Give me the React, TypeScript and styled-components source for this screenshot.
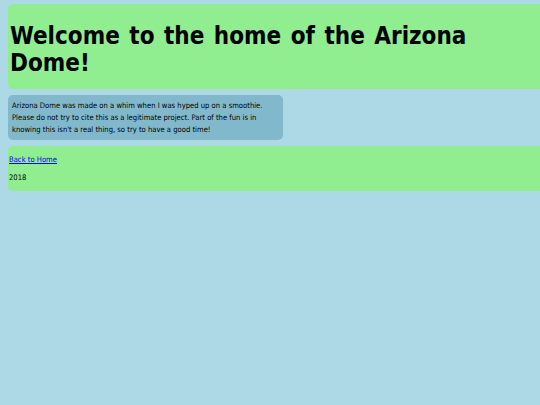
import * as React from "react";
import styled, { createGlobalStyle } from "styled-components";

const GlobalStyle = createGlobalStyle`
  html, body {
    margin: 0;
    padding: 0;
    background: #add8e6;
    overflow: hidden;
  }
  body {
    font-family: "Comic Sans MS", "DejaVu Sans Condensed", "DejaVu Sans", sans-serif;
    color: #000;
  }
`;

const Page = styled.div`
  padding: 4px 0 0 8px;
  display: flex;
  flex-direction: column;
  align-items: flex-start;
  gap: 6px;
`;

const Header = styled.header`
  box-sizing: border-box;
  width: calc(100% + 8px);
  height: 85px;
  padding: 19px 2px 0;
  background: #90ee90;
  border-radius: 5px 0 0 5px;
`;

const Title = styled.h1`
  margin: 0;
  font-size: 24px;
  line-height: 27px;
  font-weight: bold;
  letter-spacing: 0;
  word-spacing: 2px;
`;

const Blurb = styled.article`
  box-sizing: border-box;
  width: 275px;
  height: 45px;
  padding: 5px 4px;
  background: #82b8cc;
  border-radius: 5px;
  font-size: 7.6px;
  line-height: 12px;
`;

const Footer = styled.footer`
  box-sizing: border-box;
  width: calc(100% + 8px);
  height: 45px;
  padding: 8px 1px 0;
  background: #90ee90;
  border-radius: 5px 0 0 5px;
  font-size: 7.6px;
  line-height: 12px;
`;

const HomeLink = styled.a`
  display: block;
  color: #0000ee;
  text-decoration: underline;
  margin-bottom: 6px;
`;

const Year = styled.p`
  margin: 0;
`;

export default function App() {
  return (
    <>
      <GlobalStyle />
      <Page>
        <Header>
          <Title>Welcome to the home of the Arizona Dome!</Title>
        </Header>
        <Blurb>
          Arizona Dome was made on a whim when I was hyped up on a smoothie. Please do not try to
          cite this as a legitimate project. Part of the fun is in knowing this isn't a real thing,
          so try to have a good time!
        </Blurb>
        <Footer>
          <HomeLink href="#">Back to Home</HomeLink>
          <Year>2018</Year>
        </Footer>
      </Page>
    </>
  );
}
